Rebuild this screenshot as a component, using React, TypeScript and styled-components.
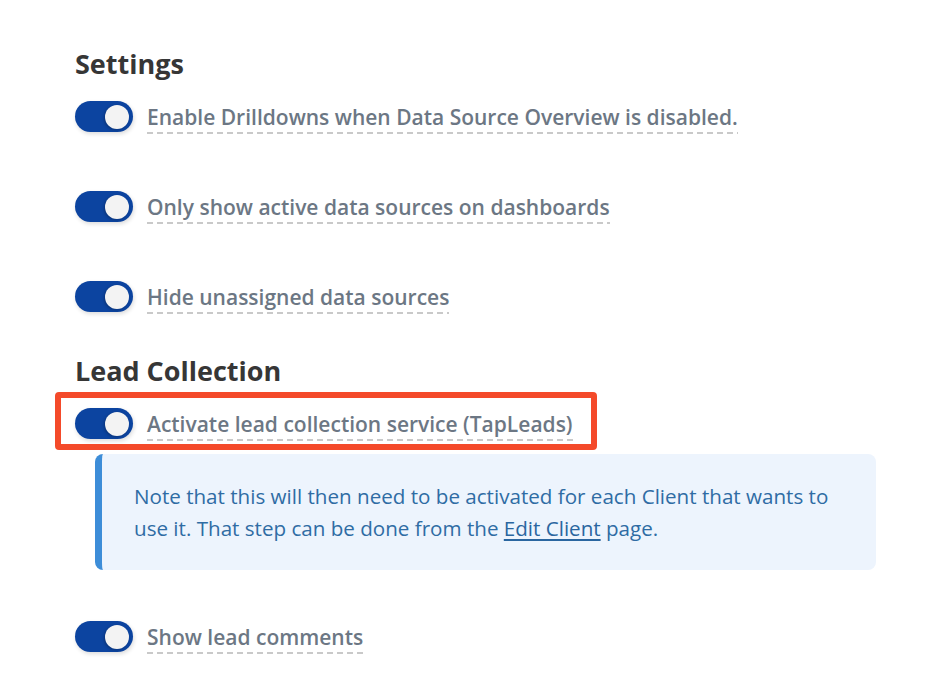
import React from 'react'
import styled, { createGlobalStyle } from 'styled-components'

const GlobalStyle = createGlobalStyle`
  body {
    margin: 0;
    background: #fff;
    font-family: 'Open Sans', 'Noto Sans', sans-serif;
  }
`

type Setting = { label: string; highlighted?: boolean }

const settings: Setting[] = [
  { label: 'Enable Drilldowns when Data Source Overview is disabled.' },
  { label: 'Only show active data sources on dashboards' },
  { label: 'Hide unassigned data sources' },
]

const Toggle: React.FC = () => (
  <Switch role='switch' aria-checked='true'>
    <Knob />
  </Switch>
)

const SettingRow: React.FC<{ label: string; highlighted?: boolean; gap?: number }> = ({ label, highlighted, gap }) => (
  <Row $highlighted={highlighted} $gap={gap}>
    <Toggle />
    <Label>{label}</Label>
  </Row>
)

export default function App() {
  return (
    <>
      <GlobalStyle />
      <Page>
        <Heading>Settings</Heading>
        {settings.map((s) => (
          <SettingRow key={s.label} label={s.label} gap={58} />
        ))}

        <Heading $top={-16}>Lead Collection</Heading>
        <SettingRow label='Activate lead collection service (TapLeads)' highlighted gap={14} />
        <Note>
          Note that this will then need to be activated for each Client that wants to use it. That step can be
          done from the <NoteLink href='#'>Edit Client</NoteLink> page.
        </Note>
        <SettingRow label='Show lead comments' gap={0} />
      </Page>
    </>
  )
}

const Page = styled.div`
  padding: 48px 75px 30px;
  display: flex;
  flex-direction: column;
  align-items: flex-start;
`

const Heading = styled.h2<{ $top?: number }>`
  margin: ${(p) => p.$top ?? 0}px 0 21px;
  font-size: 27px;
  line-height: 32px;
  font-weight: 700;
  color: #363636;
`

const Row = styled.div<{ $highlighted?: boolean; $gap?: number }>`
  position: relative;
  display: flex;
  align-items: flex-start;
  gap: 14px;
  height: 32px;
  margin-bottom: ${(p) => p.$gap ?? 58}px;

  ${(p) =>
    p.$highlighted &&
    `
    &::after {
      content: '';
      position: absolute;
      left: -20px;
      right: -24px;
      top: -16px;
      bottom: -10px;
      border: 6px solid #f44a2a;
      border-radius: 4px;
      pointer-events: none;
    }
  `}
`

const Switch = styled.div`
  flex: none;
  width: 58px;
  height: 31px;
  border-radius: 16px;
  background: #0c44a0;
  display: flex;
  align-items: center;
  justify-content: flex-end;
  padding: 0 4px;
  box-sizing: border-box;
  box-shadow: 1px 2px 4px rgba(0, 0, 0, 0.14);
`

const Knob = styled.span`
  width: 24px;
  height: 24px;
  border-radius: 50%;
  background: #f3f3f3;
  box-shadow: -1px 1px 3px rgba(0, 0, 0, 0.25);
`

const Label = styled.span`
  font-size: 21px;
  font-weight: 600;
  line-height: 27px;
  color: #6c7784;
  background-image: repeating-linear-gradient(to right, #c9c9c9 0 6px, transparent 6px 10px);
  background-size: 100% 2px;
  background-repeat: no-repeat;
  background-position: left bottom;
  padding-bottom: 3px;
  margin-top: 3px;
`

const Note = styled.div`
  margin: 0 0 51px 20px;
  width: 781px;
  box-sizing: border-box;
  padding: 26px 34px 26px 32px;
  border-left: 7px solid #3d8dd8;
  border-radius: 8px;
  background: #edf4fd;
  color: #2f6ca4;
  font-size: 20.6px;
  line-height: 32px;
`

const NoteLink = styled.a`
  color: #2a66a0;
  text-decoration: underline;
  text-underline-offset: 3px;
`
